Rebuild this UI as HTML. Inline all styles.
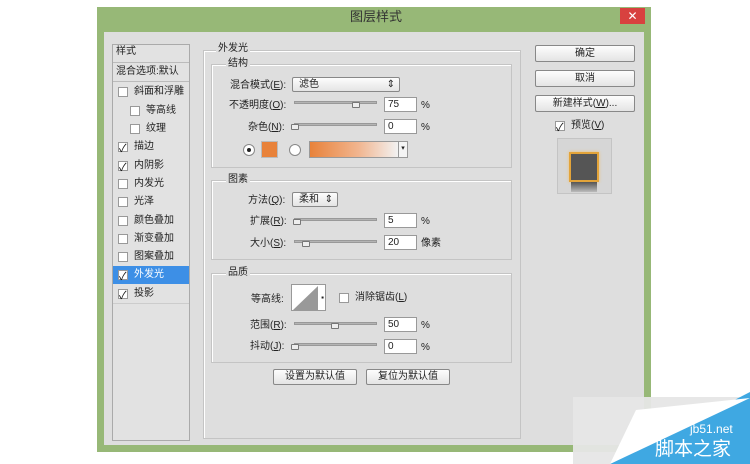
<!DOCTYPE html><html><head><meta charset="utf-8"><style>
body{margin:0;width:750px;height:464px;background:#fff;position:relative;overflow:hidden;font-family:"Liberation Sans","Noto Sans CJK SC",sans-serif;font-size:10px;color:#222}
div,span{position:absolute;box-sizing:border-box}
.t{white-space:nowrap;line-height:12px}
.cb{width:10px;height:10px;border:1px solid #999;background:#fff}
.ck::after{content:"✓";position:absolute;left:0;top:-3px;font-size:11px;color:#111}
.sl{height:3px;background:#b4b4b4;border:1px solid #999}
.th{width:8px;height:6px;border:1px solid #777;background:#eee;border-radius:1px}
.in{background:#fff;border:1px solid #999;height:15px;padding-left:3px;line-height:13px}
.btn{background:linear-gradient(#fdfdfd,#e4e4e4);border:1px solid #888;border-radius:2px;text-align:center;line-height:13px}
.grp{border:1px solid #c4c4c4;box-shadow:inset 1px 1px #fff}
.gl{background:#dedede;padding:0 2px}
</style></head><body>
<div style="left:97px;top:7px;width:554px;height:445px;background:#97b877"></div>
<div class="t" style="left:350px;top:11px;font-size:13px;color:#333">图层样式</div>
<div style="left:620px;top:8px;width:25px;height:16px;background:#d8413f;color:#fff;text-align:center;line-height:16px;font-size:12px">✕</div>
<div style="left:104px;top:32px;width:540px;height:413px;background:#dedede"></div>
<div style="left:112px;top:44px;width:78px;height:397px;border:1px solid #aaa;background:#e2e2e2"></div>
<div class="t" style="left:116px;top:46px">样式</div>
<div style="left:113px;top:62px;width:76px;height:1px;background:#bbb"></div>
<div class="t" style="left:116px;top:66px">混合选项:默认</div>
<div style="left:113px;top:81px;width:76px;height:1px;background:#bbb"></div>
<div style="left:113px;top:266px;width:76px;height:18px;background:#3d8fe6"></div>
<div class="cb" style="left:118px;top:87px"></div><div class="t" style="left:134px;top:86px">斜面和浮雕</div>
<div class="cb" style="left:130px;top:106px"></div><div class="t" style="left:146px;top:105px">等高线</div>
<div class="cb" style="left:130px;top:124px"></div><div class="t" style="left:146px;top:123px">纹理</div>
<div class="cb ck" style="left:118px;top:142px"></div><div class="t" style="left:134px;top:141px">描边</div>
<div class="cb ck" style="left:118px;top:161px"></div><div class="t" style="left:134px;top:160px">内阴影</div>
<div class="cb" style="left:118px;top:179px"></div><div class="t" style="left:134px;top:178px">内发光</div>
<div class="cb" style="left:118px;top:197px"></div><div class="t" style="left:134px;top:196px">光泽</div>
<div class="cb" style="left:118px;top:216px"></div><div class="t" style="left:134px;top:215px">颜色叠加</div>
<div class="cb" style="left:118px;top:234px"></div><div class="t" style="left:134px;top:233px">渐变叠加</div>
<div class="cb" style="left:118px;top:252px"></div><div class="t" style="left:134px;top:251px">图案叠加</div>
<div class="cb ck" style="left:118px;top:270px"></div><div class="t" style="left:134px;top:269px;color:#fff">外发光</div>
<div class="cb ck" style="left:118px;top:289px"></div><div class="t" style="left:134px;top:288px">投影</div>
<div style="left:113px;top:303px;width:76px;height:1px;background:#ccc"></div>
<div class="grp" style="left:203px;top:50px;width:318px;height:389px"></div>
<div class="t gl" style="left:216px;top:43px">外发光</div>
<div class="grp" style="left:211px;top:64px;width:301px;height:104px"></div>
<div class="t gl" style="left:226px;top:58px">结构</div>
<div class="t" style="left:230px;top:80px">混合模式(<u>E</u>):</div>
<div class="btn" style="left:292px;top:77px;width:108px;height:15px;text-align:left;padding-left:6px">滤色<span style="right:4px;top:0">⇕</span></div>
<div class="t" style="left:229px;top:100px">不透明度(<u>O</u>):</div>
<div class="sl" style="left:294px;top:101px;width:83px"></div><div class="th" style="left:352px;top:102px"></div>
<div class="in" style="left:384px;top:97px;width:33px">75</div><div class="t" style="left:421px;top:100px">%</div>
<div class="t" style="left:248px;top:122px">杂色(<u>N</u>):</div>
<div class="sl" style="left:294px;top:123px;width:83px"></div><div class="th" style="left:291px;top:124px"></div>
<div class="in" style="left:384px;top:119px;width:33px">0</div><div class="t" style="left:421px;top:122px">%</div>
<div style="left:243px;top:144px;width:12px;height:12px;border:1px solid #888;border-radius:50%;background:#fff"><span style="left:3px;top:3px;width:4px;height:4px;border-radius:50%;background:#222"></span></div>
<div style="left:261px;top:141px;width:17px;height:17px;background:#e8823a;border:1px solid #bbb"></div>
<div style="left:289px;top:144px;width:12px;height:12px;border:1px solid #888;border-radius:50%;background:#fff"></div>
<div style="left:309px;top:141px;width:90px;height:17px;border:1px solid #999;background:linear-gradient(90deg,#e8823a,#f1b58f 55%,#f2f2f2)"></div>
<div style="left:398px;top:141px;width:10px;height:17px;border:1px solid #999;background:#f4f4f4;font-size:7px;text-align:center;line-height:14px">▾</div>
<div class="grp" style="left:211px;top:180px;width:301px;height:80px"></div>
<div class="t gl" style="left:226px;top:174px">图素</div>
<div class="t" style="left:248px;top:195px">方法(<u>Q</u>):</div>
<div class="btn" style="left:292px;top:192px;width:46px;height:15px;text-align:left;padding-left:6px">柔和<span style="right:4px;top:0">⇕</span></div>
<div class="t" style="left:250px;top:216px">扩展(<u>R</u>):</div>
<div class="sl" style="left:294px;top:218px;width:83px"></div><div class="th" style="left:293px;top:219px"></div>
<div class="in" style="left:384px;top:213px;width:33px">5</div><div class="t" style="left:421px;top:216px">%</div>
<div class="t" style="left:250px;top:238px">大小(<u>S</u>):</div>
<div class="sl" style="left:294px;top:240px;width:83px"></div><div class="th" style="left:302px;top:241px"></div>
<div class="in" style="left:384px;top:235px;width:33px">20</div><div class="t" style="left:421px;top:238px">像素</div>
<div class="grp" style="left:211px;top:273px;width:301px;height:90px"></div>
<div class="t gl" style="left:226px;top:267px">品质</div>
<div class="t" style="left:251px;top:294px">等高线:</div>
<div style="left:291px;top:284px;width:35px;height:27px;border:1px solid #999;background:#fff"><svg width="27" height="25" style="position:absolute;left:0;top:0"><polygon points="1,25 26,1 26,25" fill="#999"/></svg><span style="right:1px;top:8px;font-size:8px">▪</span></div>
<div class="cb" style="left:339px;top:293px"></div><div class="t" style="left:355px;top:292px">消除锯齿(<u>L</u>)</div>
<div class="t" style="left:250px;top:320px">范围(<u>R</u>):</div>
<div class="sl" style="left:294px;top:322px;width:83px"></div><div class="th" style="left:331px;top:323px"></div>
<div class="in" style="left:384px;top:317px;width:33px">50</div><div class="t" style="left:421px;top:320px">%</div>
<div class="t" style="left:250px;top:341px">抖动(<u>J</u>):</div>
<div class="sl" style="left:294px;top:343px;width:83px"></div><div class="th" style="left:291px;top:344px"></div>
<div class="in" style="left:384px;top:339px;width:33px">0</div><div class="t" style="left:421px;top:342px">%</div>
<div class="btn" style="left:273px;top:369px;width:84px;height:16px">设置为默认值</div>
<div class="btn" style="left:366px;top:369px;width:84px;height:16px">复位为默认值</div>
<div class="btn" style="left:535px;top:45px;width:100px;height:17px;line-height:15px">确定</div>
<div class="btn" style="left:535px;top:70px;width:100px;height:17px;line-height:15px">取消</div>
<div class="btn" style="left:535px;top:95px;width:100px;height:17px;line-height:15px">新建样式(<u>W</u>)...</div>
<div class="cb ck" style="left:555px;top:121px"></div><div class="t" style="left:571px;top:120px">预览(<u>V</u>)</div>
<div style="left:557px;top:138px;width:55px;height:56px;background:#d6d6d6;border:1px solid #c4c4c4"></div>
<div style="left:569px;top:152px;width:30px;height:30px;background:#555;border:2px solid #e3a43a;box-shadow:0 0 3px #f0c070"></div>
<div style="left:571px;top:182px;width:26px;height:10px;background:linear-gradient(#555,#bbb)"></div>
<svg width="750" height="464" style="position:absolute;left:0;top:0">
<polygon points="573,397 750,397 750,464 573,464" fill="#e6e6e6" opacity=".95"/>
<polygon points="610,464 750,392 750,464" fill="#3fa8e2"/>
<polygon points="610,464 636,410 750,398" fill="#fff"/>
</svg>
<div class="t" style="left:690px;top:423px;color:#fff;font-size:12px">jb51.net</div>
<div class="t" style="left:655px;top:440px;color:#fff;font-size:19px;line-height:20px">脚本之家</div>
</body></html>
